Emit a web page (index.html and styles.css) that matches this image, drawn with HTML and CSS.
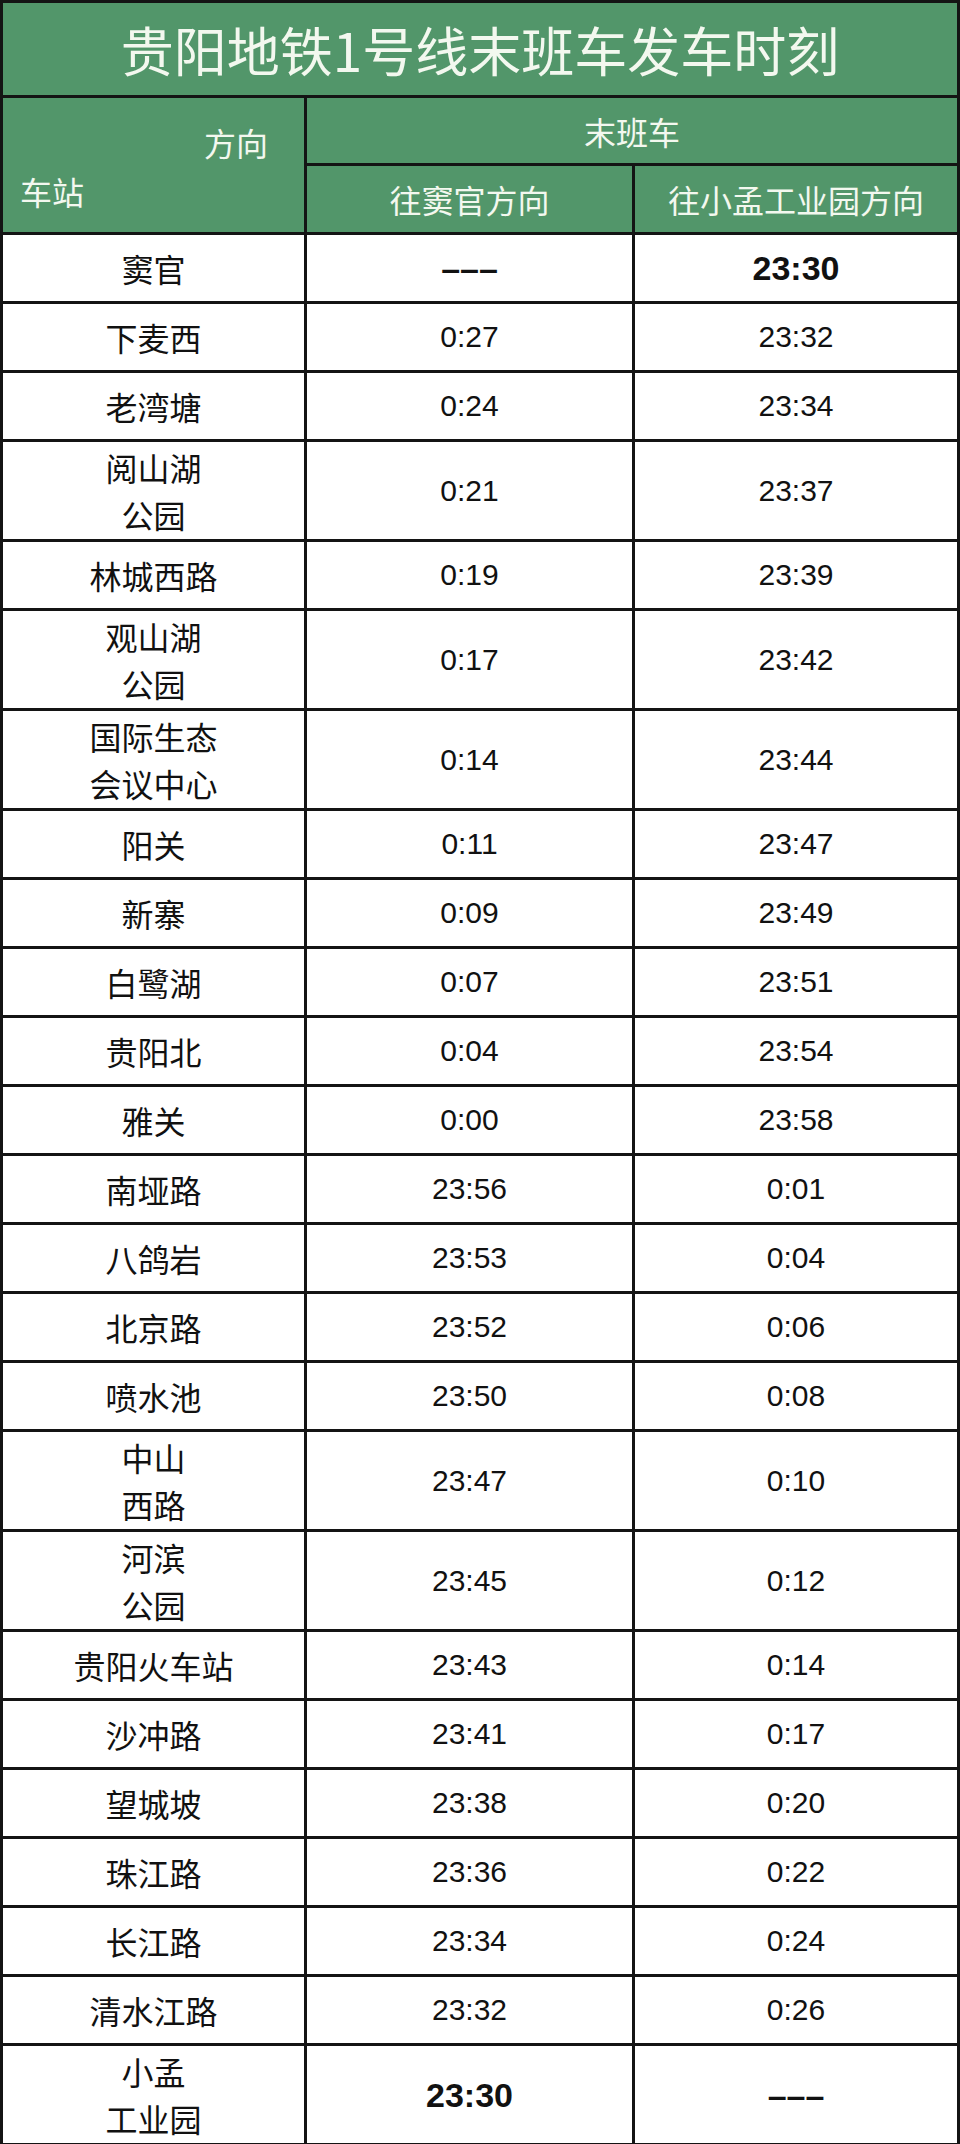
FILE: index.html
```html
<!DOCTYPE html>
<html lang="zh-CN">
<head>
<meta charset="utf-8">
<title>贵阳地铁1号线末班车发车时刻</title>
<link rel="stylesheet" href="styles.css">
</head>
<body>
<div class="sheet">
  <div class="title">贵阳地铁1号线末班车发车时刻</div>

  <div class="hd corner">
    <span class="dir">方向</span>
    <span class="stn">车站</span>
  </div>
  <div class="hd last">末班车</div>
  <div class="hd sub">往窦官方向</div>
  <div class="hd sub">往小孟工业园方向</div>

  <div class="st one">窦官</div><div class="tm strong">–––</div><div class="tm strong">23:30</div>
  <div class="st one">下麦西</div><div class="tm">0:27</div><div class="tm">23:32</div>
  <div class="st one">老湾塘</div><div class="tm">0:24</div><div class="tm">23:34</div>
  <div class="st two">阅山湖<br>公园</div><div class="tm">0:21</div><div class="tm">23:37</div>
  <div class="st one">林城西路</div><div class="tm">0:19</div><div class="tm">23:39</div>
  <div class="st two">观山湖<br>公园</div><div class="tm">0:17</div><div class="tm">23:42</div>
  <div class="st two">国际生态<br>会议中心</div><div class="tm">0:14</div><div class="tm">23:44</div>
  <div class="st one">阳关</div><div class="tm">0:11</div><div class="tm">23:47</div>
  <div class="st one">新寨</div><div class="tm">0:09</div><div class="tm">23:49</div>
  <div class="st one">白鹭湖</div><div class="tm">0:07</div><div class="tm">23:51</div>
  <div class="st one">贵阳北</div><div class="tm">0:04</div><div class="tm">23:54</div>
  <div class="st one">雅关</div><div class="tm">0:00</div><div class="tm">23:58</div>
  <div class="st one">南垭路</div><div class="tm">23:56</div><div class="tm">0:01</div>
  <div class="st one">八鸽岩</div><div class="tm">23:53</div><div class="tm">0:04</div>
  <div class="st one">北京路</div><div class="tm">23:52</div><div class="tm">0:06</div>
  <div class="st one">喷水池</div><div class="tm">23:50</div><div class="tm">0:08</div>
  <div class="st two">中山<br>西路</div><div class="tm">23:47</div><div class="tm">0:10</div>
  <div class="st two">河滨<br>公园</div><div class="tm">23:45</div><div class="tm">0:12</div>
  <div class="st one">贵阳火车站</div><div class="tm">23:43</div><div class="tm">0:14</div>
  <div class="st one">沙冲路</div><div class="tm">23:41</div><div class="tm">0:17</div>
  <div class="st one">望城坡</div><div class="tm">23:38</div><div class="tm">0:20</div>
  <div class="st one">珠江路</div><div class="tm">23:36</div><div class="tm">0:22</div>
  <div class="st one">长江路</div><div class="tm">23:34</div><div class="tm">0:24</div>
  <div class="st one">清水江路</div><div class="tm">23:32</div><div class="tm">0:26</div>
  <div class="st two">小孟<br>工业园</div><div class="tm strong">23:30</div><div class="tm strong">–––</div>
</div>
</body>
</html>
```

FILE: styles.css
```css
html, body {
  margin: 0;
  padding: 0;
  background: #ffffff;
}

.sheet {
  width: 960px;
  box-sizing: border-box;
  display: grid;
  grid-template-columns: 301px 325px 322px;
  gap: 3px;
  padding: 3px;
  background: #141414;
}

.sheet > div {
  display: flex;
  align-items: center;
  justify-content: center;
  text-align: center;
}

.title {
  grid-column: 1 / -1;
  height: 92px;
  background: #52966a;
  color: #f3f8ef;
  font-family: "Noto Sans CJK SC", "Noto Sans", sans-serif;
  font-size: 53px;
  line-height: 1;
}

.hd {
  background: #52966a;
  color: #f3f8ef;
  font-family: "Noto Sans CJK SC", "Noto Sans", sans-serif;
  font-size: 32px;
  line-height: 1;
}

.sheet > .corner {
  grid-row: span 2;
  flex-direction: column;
  align-items: stretch;
  justify-content: flex-start;
  padding: 28px 36px 0 17px;
}

.corner .dir {
  text-align: right;
}

.corner .stn {
  text-align: left;
  margin-top: 17px;
}

.last {
  grid-column: 2 / 4;
  height: 65px;
}

.sub {
  height: 66px;
}

.st {
  background: #ffffff;
  color: #111111;
  font-family: "Noto Sans CJK SC", "Noto Sans", sans-serif;
  font-size: 32px;
  line-height: 47px;
}

.st.one {
  height: 66px;
}

.st.two {
  height: 97px;
}

.tm {
  background: #ffffff;
  color: #111111;
  font-family: "Liberation Sans", Arial, sans-serif;
  font-size: 30px;
  line-height: 1;
}

.tm.strong {
  font-weight: bold;
  font-size: 34px;
}
```
